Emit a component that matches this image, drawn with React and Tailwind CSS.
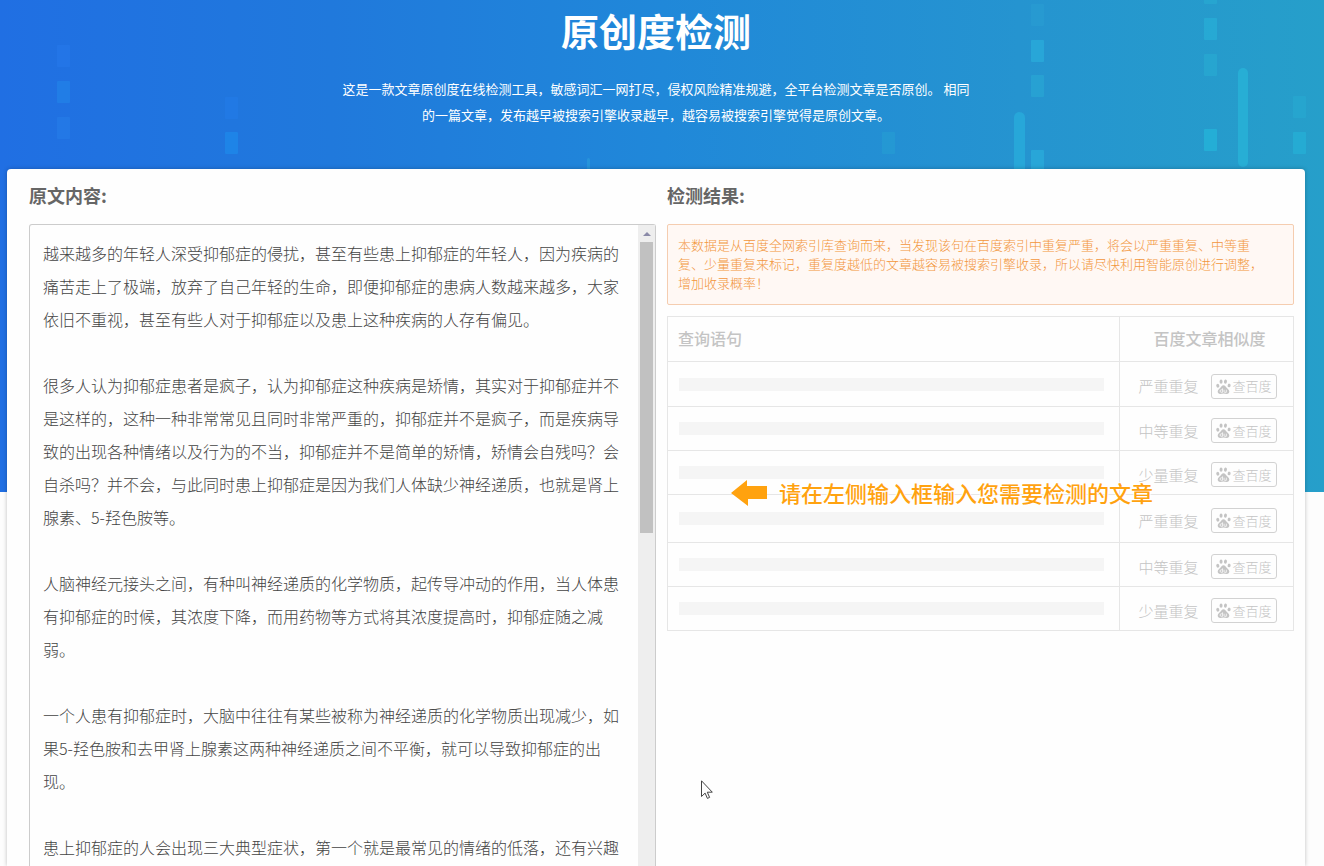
import React from "react";

const ARTICLE = [
  "越来越多的年轻人深受抑郁症的侵扰，甚至有些患上抑郁症的年轻人，因为疾病的痛苦走上了极端，放弃了自己年轻的生命，即便抑郁症的患病人数越来越多，大家依旧不重视，甚至有些人对于抑郁症以及患上这种疾病的人存有偏见。",
  "很多人认为抑郁症患者是疯子，认为抑郁症这种疾病是矫情，其实对于抑郁症并不是这样的，这种一种非常常见且同时非常严重的，抑郁症并不是疯子，而是疾病导致的出现各种情绪以及行为的不当，抑郁症并不是简单的矫情，矫情会自残吗？会自杀吗？并不会，与此同时患上抑郁症是因为我们人体缺少神经递质，也就是肾上腺素、5-羟色胺等。",
  "人脑神经元接头之间，有种叫神经递质的化学物质，起传导冲动的作用，当人体患有抑郁症的时候，其浓度下降，而用药物等方式将其浓度提高时，抑郁症随之减弱。",
  "一个人患有抑郁症时，大脑中往往有某些被称为神经递质的化学物质出现减少，如果5-羟色胺和去甲肾上腺素这两种神经递质之间不平衡，就可以导致抑郁症的出现。",
  "患上抑郁症的人会出现三大典型症状，第一个就是最常见的情绪的低落，还有兴趣",
].join("\n\n");

const ROWS = [
  { level: "严重重复", height: "h-[45px]" },
  { level: "中等重复", height: "h-[44px]" },
  { level: "少量重复", height: "h-[44px]" },
  { level: "严重重复", height: "h-[48px]" },
  { level: "中等重复", height: "h-[44px]" },
  { level: "少量重复", height: "h-[44px]" },
];

const BLOCKS = [
  [57, 45, "#2b7ff0", 0.35],
  [57, 81, "#2492ee", 0.4],
  [57, 117, "#2b86ee", 0.35],
  [225, 97, "#2680f0", 0.35],
  [225, 132, "#1c92f0", 0.5],
  [882, 132, "#28a8d4", 0.35],
  [1031, 4, "#2aa4d4", 0.35],
  [1031, 40, "#29aedb", 0.7],
  [1031, 75, "#29aed6", 0.5],
  [1031, 150, "#29aedb", 0.7],
  [1204, -18, "#28b0d4", 0.5],
  [1204, 18, "#28b2d8", 0.6],
  [1204, 54, "#28b0d4", 0.5],
  [1204, 129, "#24b6da", 0.7],
  [1293, 96, "#28b0d4", 0.4],
  [1293, 132, "#24b4d8", 0.6],
];

function BannerPattern() {
  return (
    <svg className="pointer-events-none absolute inset-x-0 top-0 h-[169px] w-full" aria-hidden="true">
      {BLOCKS.map(([x, y, fill, opacity]) => (
        <rect key={x + "-" + y} x={x} y={y} width="13" height="22" rx="1" fill={fill} opacity={opacity} />
      ))}
      <rect x="1014" y="112" width="11" height="64" rx="5.5" fill="#28abdb" opacity="0.8" />
      <rect x="1238" y="68" width="10" height="99" rx="5" fill="#28b0d6" opacity="0.9" />
      <rect x="587" y="158" width="3" height="12" rx="1.5" fill="#2c9fdc" opacity="0.6" />
    </svg>
  );
}

function PawIcon() {
  return (
    <svg className="size-[15px] shrink-0" viewBox="0 0 16 16" fill="currentColor" aria-hidden="true">
      <ellipse cx="1.9" cy="7.2" rx="1.6" ry="2" transform="rotate(-12 1.9 7.2)" />
      <ellipse cx="5.4" cy="2.8" rx="1.6" ry="2.2" />
      <ellipse cx="10.1" cy="2.8" rx="1.6" ry="2.2" transform="rotate(8 10.1 2.8)" />
      <ellipse cx="14" cy="6.9" rx="1.6" ry="2" transform="rotate(12 14 6.9)" />
      <path d="M8 6.6c1.5 0 2.3 1.3 3.1 2.5.8 1.1 3.1 2.2 3.1 4.3 0 1.5-1.1 2.5-2.7 2.5-1.3 0-2.2-.4-3.5-.4s-2.2.4-3.5.4c-1.6 0-2.7-1-2.7-2.5 0-2.1 2.3-3.2 3.1-4.3C5.7 7.9 6.500 6.600 8 6.600z" />
      <path d="M7 10v4.200H5.700a1.300 1.300 0 0 1 0-2.700H7M8.600 11.400v2.100c0 .5.3.7.700.7h1.700v-2.800" fill="none" stroke="#fff" strokeWidth="0.8" />
    </svg>
  );
}

export default function App() {
  return (
    <div
      lang="zh-CN"
      className="relative flex h-screen flex-col overflow-hidden bg-[#fdfdfd] bg-[linear-gradient(90deg,#206fe3_0%,#2079dc_25%,#2088d9_50%,#2594d0_77%,#269fca_100%)] bg-[length:100%_492px] bg-no-repeat pr-[19px] pl-[7px] font-['Noto_Sans_CJK_SC',sans-serif]"
    >
      <BannerPattern />

      <header className="relative flex h-[169px] shrink-0 flex-col items-center pt-1 text-center text-white">
        <h1 className="text-[38px] leading-[52px] font-bold">原创度检测</h1>
        <p className="mt-5 max-w-[638px] text-[13px] leading-[26px]">
          这是一款文章原创度在线检测工具，敏感词汇一网打尽，侵权风险精准规避，全平台检测文章是否原创。 相同的一篇文章，发布越早被搜索引擎收录越早，越容易被搜索引擎觉得是原创文章。
        </p>
      </header>

      <main className="relative grid min-h-0 flex-1 grid-cols-2 gap-[11px] rounded-t bg-[#fefefe] pr-[11px] pl-[22px] shadow-[0_0_4px_rgba(0,0,0,0.25)]">
        <section className="flex min-h-0 flex-col">
          <h2 className="pt-3 text-lg leading-7 font-bold text-[#666]">
            <label htmlFor="source">原文内容:</label>
          </h2>
          <div className="mt-[15px] flex min-h-0 flex-1 rounded-t-[3px] border border-b-0 border-[#ccc]">
            <textarea
              id="source"
              defaultValue={ARTICLE}
              className="min-w-0 flex-1 resize-none overflow-hidden bg-transparent px-[13px] pt-3 text-base leading-[33px] font-light text-[#444] outline-none"
            />
            <div className="flex w-[17px] shrink-0 flex-col items-center bg-[#eee]" aria-hidden="true">
              <svg className="h-[17px] w-2" viewBox="0 0 8 17">
                <path d="M0 11 4 7l4 4z" fill="#8a8aa8" />
              </svg>
              <div className="h-[291px] w-[13px] bg-[#c1c1c1]" />
            </div>
          </div>
        </section>

        <section>
          <h2 className="pt-3 text-lg leading-7 font-bold text-[#666]">检测结果:</h2>
          <p className="mt-[15px] rounded-[2px] border border-[#f5cdb0] bg-[#fff8f4] pt-[10px] pr-5 pb-[12px] pl-[10px] text-[13px] leading-[19px] font-light text-[#f2963c]">
            本数据是从百度全网索引库查询而来，当发现该句在百度索引中重复严重，将会以严重重复、中等重复、少量重复来标记，重复度越低的文章越容易被搜索引擎收录，所以请尽快利用智能原创进行调整，增加收录概率！
          </p>

          <div className="relative mt-[11px]">
            <table className="w-full table-fixed border-collapse text-[15px] text-[#c4c4c4]">
              <thead>
                <tr className="h-[45px] text-base">
                  <th className="border border-[#e6e6e6] px-[10px] pb-[3px] text-left font-medium">查询语句</th>
                  <th className="w-[174px] border border-[#e6e6e6] pb-[3px] pl-[6px] font-medium">百度文章相似度</th>
                </tr>
              </thead>
              <tbody>
                {ROWS.map((row, index) => (
                  <tr key={index} className={row.height}>
                    <td className="border border-[#e6e6e6] pr-[15px] pl-[11px]">
                      <div className="h-[13px] bg-[#f5f5f5]" />
                    </td>
                    <td className="border border-[#e6e6e6] pt-1 pl-[2px]">
                      <div className="flex items-center justify-center gap-3">
                        <span className="leading-5 font-light">{row.level}</span>
                        <button
                          type="button"
                          className="flex h-[25px] items-center gap-[2px] rounded-[3px] border border-[#d2d2d2] px-1 text-[13px] font-light"
                        >
                          <PawIcon />
                          查百度
                        </button>
                      </div>
                    </td>
                  </tr>
                ))}
              </tbody>
            </table>

            <div className="absolute top-[162px] left-[64px] flex items-start gap-3 text-[22px] leading-7 font-medium text-[#ffa20f] [text-shadow:0_0_2px_#fff,1px_1px_1px_#fff,-1px_-1px_1px_#fff]">
              <svg className="mt-[2px] h-[26px] w-9 fill-current" viewBox="0 0 36 26" aria-hidden="true">
                <path d="M0 13 16 0v6h20v13H17v7z" />
              </svg>
              <span className="whitespace-nowrap">请在左侧输入框输入您需要检测的文章</span>
            </div>
          </div>
        </section>
      </main>

      <svg className="pointer-events-none absolute top-[780px] left-[701px] h-5 w-3" viewBox="0 0 12 20" aria-hidden="true">
        <path d="M.5.8v15.700l3.600-3.400 2.300 5.300 2.200-1-2.300-5.200h5z" fill="#fff" stroke="#444" strokeWidth="1" />
      </svg>
    </div>
  );
}
